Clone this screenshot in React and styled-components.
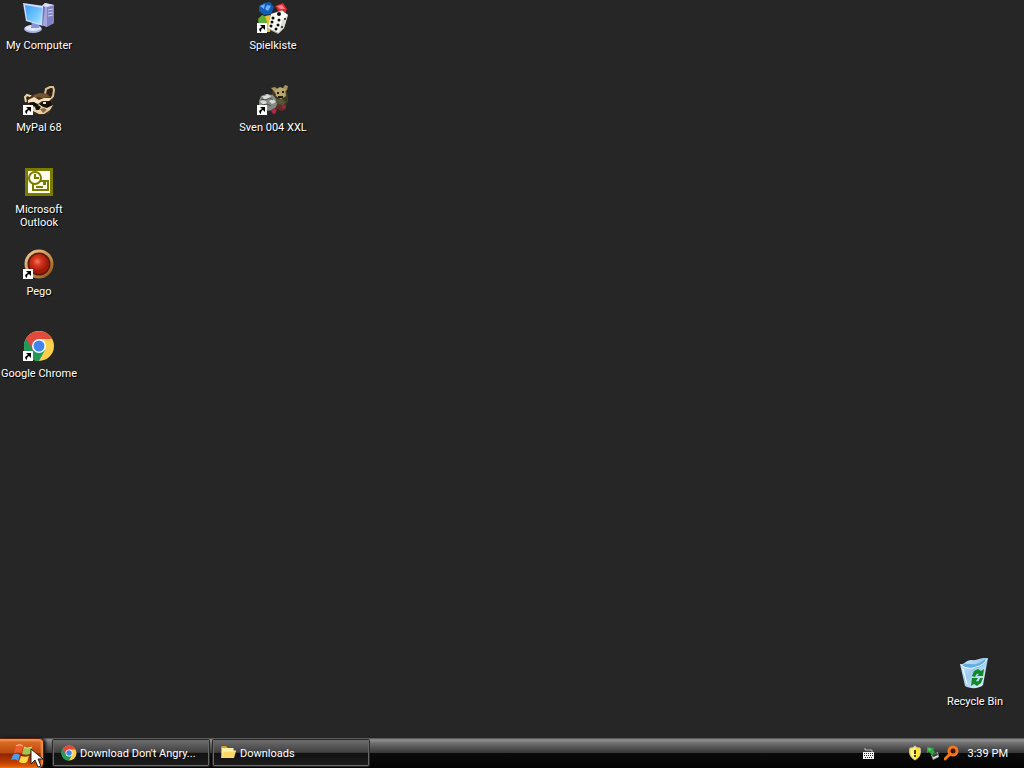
import React from "react";
import styled, { createGlobalStyle } from "styled-components";

const GlobalStyle = createGlobalStyle`
  * { box-sizing: border-box; }
  body { margin: 0; background: #262626; overflow: hidden; }
  body, button { font-family: Tahoma, Roboto, "Liberation Sans", sans-serif; font-size: 11px; line-height: 13px; color: #fff; }
`;
const Screen = styled.div`
  display: flex;
  flex-direction: column;
  height: 100vh;
`;
const Desktop = styled.main`
  flex: 1;
  min-height: 0;
  display: grid;
  grid-template-columns: repeat(auto-fill, 78px);
  grid-template-rows: repeat(auto-fill, 82px);
`;
const Shortcut = styled.button`
  grid-column: ${(p) => p.$col};
  grid-row: ${(p) => p.$row};
  display: flex;
  flex-direction: column;
  align-items: center;
  gap: 5px;
  padding: 2px 0 0;
  border: 0;
  background: none;
`;
const Label = styled.span`
  max-width: ${(p) => (p.$wrap ? "60px" : "none")};
  white-space: ${(p) => (p.$wrap ? "normal" : "nowrap")};
  text-shadow: 1px 1px 1px #000;
`;
const Icon = styled.svg`
  display: block;
  flex: none;
  width: ${(p) => p.$size || 32}px;
  height: ${(p) => p.$size || 32}px;
`;
const Taskbar = styled.footer`
  flex: none;
  height: 30px;
  display: flex;
  background: linear-gradient(#454545 0, #929292 6%, #727272 16%, #575757 30%, #373737 49%, #0b0b0b 51%, #030303 100%);
`;
const StartButton = styled.button`
  position: relative;
  width: 44px;
  padding: 0 0 0 11px;
  display: flex;
  align-items: center;
  border: 1px solid #5e1c05;
  border-width: 1px 1px 0 0;
  border-radius: 0 5px 5px 0;
  background: linear-gradient(#f5a060 0, #d86820 12%, #b94a10 47%, #8e2500 52%, #b83a00 78%, #e86708 100%);
  box-shadow: inset -2px 0 2px #f2914a, 2px 0 3px #111;
`;
const Pointer = styled.svg`
  position: absolute;
  left: 30px;
  top: 9px;
  width: 13px;
  height: 20px;
`;
const Tasks = styled.nav`
  flex: 1;
  min-width: 0;
  display: flex;
  gap: 4px;
  padding: 2px 0 2px 9px;
`;
const TaskButton = styled.button`
  flex: 0 1 156px;
  min-width: 0;
  display: flex;
  align-items: center;
  gap: 3px;
  padding: 0 7px;
  border: 1px solid #686868;
  border-radius: 1px;
  background: linear-gradient(#6a6a6a 0, #404040 47%, #121212 52%, #1c1c1c 100%);
  box-shadow: 0 0 0 1px #2a2a2a;
  white-space: nowrap;
`;
const Tray = styled.div`
  display: flex;
  align-items: center;
  gap: 2px;
  padding-right: 16px;
`;
const InputIndicator = styled.div`
  padding-right: 28px;
`;
const Clock = styled.time`
  padding-left: 6px;
  white-space: nowrap;
`;

const Arrow = () => (
  <g>
    <path d="M0 21h10v10H0z" fill="#fff" />
    <path d="M3 23h5v5l-2-2c-2 1-2 2-2 4-3-2-2-4 1-5z" fill="#000" />
  </g>
);

const ComputerIcon = () => (
  <Icon viewBox="0 0 32 32">
    <defs>
      <linearGradient id="screen" x1="0" y1="0" x2="1" y2="1">
        <stop offset="0" stopColor="#3f9cf5" /><stop offset=".6" stopColor="#72c7ff" /><stop offset="1" stopColor="#b5e8ff" />
      </linearGradient>
    </defs>
    <path d="M19 4l3-3 9 2v18l-8 4-4-2z" fill="#a4a6dc" />
    <path d="M24 5l7-2v18l-7 4z" fill="#8382c2" />
    <path d="M19 4l3-3 9 2-7 2z" fill="#dcdef7" />
    <path d="M25 8l5-1M25 11l5-1M25 14l5-1" stroke="#ccd0f6" />
    <ellipse cx="10" cy="27" rx="9" ry="4" fill="#a9b2df" />
    <ellipse cx="10" cy="26" rx="8" ry="3" fill="#e0e6fc" />
    <path d="M9 19h8l-1 7H8z" fill="#8895d4" />
    <path d="M0 1l21 3-1 20L3 19z" fill="#cfdcff" />
    <path d="M2 3l17 3-1 16L4 18z" fill="url(#screen)" />
    <path d="M20 4l2 1-2 18-1 1z" fill="#6d78bb" />
  </Icon>
);
const RaccoonIcon = () => (
  <Icon viewBox="0 0 32 32">
    <path d="M22 10l1-5 4-2h3l1 3-1 6-3 4z" fill="#2f2015" stroke="#dcc091" strokeWidth="2" />
    <path d="M3 18l-1-5 2-2 6 2" fill="#2f2015" stroke="#eed7ab" strokeWidth="2" />
    <path d="M4 16l5-5 7-2 9 1 4 5 1 8-4 6-8 2-8-2-5-6z" fill="#4a3220" />
    <path d="M11 11l6-2 7 1 3 3-7 1-5-1-6 3z" fill="#755432" />
    <path d="M5 16l6-3 5 3 5-2 8 0-3 3-7 0-4 3-5-2-5 1z" fill="#f3e3c1" />
    <path d="M5 19l6-1 4 3 5-3 8-1 1 4-5 3-5-2-4 2-6-2z" fill="#140e0a" />
    <path d="M8 22l5 1 3-3 4 3 4 1 6-3-3 5-6 4h-5l-6-3z" fill="#e5d2a8" />
    <path d="M17 25l4-1 3 2-4 3z" fill="#8d6945" />
    <path d="M12 23l3-2 3 2-2 3-3 0z" fill="#17100b" />
    <path d="M20 18h3v2h-3z" fill="#e9ddc3" />
    <Arrow />
  </Icon>
);
const OutlookIcon = () => (
  <Icon viewBox="0 0 32 32">
    <path d="M2 2h28v28H2z" fill="#7b7b00" />
    <path d="M5 5h22v22H5z" fill="#fffff1" />
    <path d="M10 15h15v9H10z" fill="#fffff1" stroke="#7b7b00" strokeWidth="2" />
    <circle cx="12" cy="12" r="6" fill="#fffff1" stroke="#7b7b00" strokeWidth="2" />
    <path d="M12 8v4h4M13 21h7" fill="none" stroke="#7b7b00" strokeWidth="2" />
    <path d="M20 16h3v3h-3z" fill="#7b7b00" />
  </Icon>
);
const PegoIcon = () => (
  <Icon viewBox="0 0 32 32">
    <defs>
      <radialGradient id="gem" cx=".42" cy=".38">
        <stop offset="0" stopColor="#f57862" /><stop offset=".4" stopColor="#d7371e" /><stop offset="1" stopColor="#a01a0a" />
      </radialGradient>
      <linearGradient id="rim" x1="0" y1="0" x2="1" y2="1">
        <stop offset="0" stopColor="#ecc897" /><stop offset=".6" stopColor="#c58a4c" /><stop offset="1" stopColor="#8b4b19" />
      </linearGradient>
    </defs>
    <circle cx="16" cy="16" r="13" fill="#5b1b08" stroke="url(#rim)" strokeWidth="3" />
    <circle cx="16" cy="16" r="10" fill="url(#gem)" />
    <Arrow />
  </Icon>
);
const ChromeIcon = ({ size, arrow }) => (
  <Icon viewBox="0 0 32 32" $size={size}>
    <circle cx="16" cy="16" r="15" fill="#fdd04b" />
    <path d="M16 16L3 8.500A15 15 0 0 0 16 31l6-11z" fill="#21995a" />
    <path d="M3 8.500A15 15 0 0 1 29 9H16L10 20z" fill="#e24a3b" />
    <circle cx="16" cy="16" r="7" fill="#fff" />
    <circle cx="16" cy="16" r="5.500" fill="#4284ed" />
    {arrow && <Arrow />}
  </Icon>
);
const GamesIcon = () => (
  <Icon viewBox="0 0 32 32">
    <path d="M2 4l5-3 6-1 4 5-3 7-7 1-5-4z" fill="#155bb5" />
    <path d="M3 4l5-2-1 5zM10 3l4 1-3 5-3-2z" fill="#63b5ff" />
    <path d="M18 4l8-3 4 6-2 5-6-2z" fill="#dc2933" />
    <path d="M20 4l5-1 3 4-5 0z" fill="#ff807e" />
    <path d="M1 17l4-4 5 2 2 6-6 6-4-3z" fill="#5caf37" />
    <path d="M8 14l5-1 2 4-2 13H9l1-10z" fill="#e9bd2e" />
    <path d="M14 12l11-4 6 5-4 13-6 6-10-5z" fill="#a9a9a4" />
    <path d="M14 12l11-3 6 4-5 5z" fill="#fff" />
    <path d="M14 12l12 5-4 14-11-5z" fill="#fafaf5" />
    <path d="M26 17l5-4-4 13-5 5z" fill="#deded7" />
    <g fill="#111"><circle cx="16" cy="16" r="1.500" /><circle cx="22" cy="18" r="1.500" /><circle cx="15" cy="20" r="1.500" /><circle cx="21" cy="23" r="1.500" /><circle cx="14" cy="24" r="1.500" /><circle cx="19" cy="27" r="1.500" /><circle cx="22" cy="12" r="2" /><circle cx="28" cy="17" r="1" /><circle cx="25" cy="25" r="1" /></g>
    <Arrow />
  </Icon>
);
const SheepIcon = () => (
  <Icon viewBox="0 0 32 32">
    <path d="M15 8l5-4 9 0 2 7 0 7-4 6-8 1-4-7z" fill="#3f3a24" />
    <path d="M14 4l4-1 4 4-3 3zM26 4l2-3 3 1-1 4-3 2z" fill="#a9935b" />
    <path d="M18 6l5-3 5 2 1 7-5 3-5-3z" fill="#b9a76f" />
    <path d="M20 8h2v2h-2zM25 7h2v2h-2zM21 12h5v2h-5z" fill="#25200e" />
    <path d="M2 17l2-5 5-2 7 1 3 4 1 6-3 5-8 1-7-4z" fill="#858987" />
    <path d="M5 12l3 0 2-2 4 2-2 3-5 0zM3 17l5-1 2 3-3 3zM12 17l4-2 3 3-4 2z" fill="#d8dad6" />
    <path d="M4 15l4 1 5-2 3 2M5 21l5-1 4 2" stroke="#4b4d4c" fill="none" />
    <path d="M20 20l5-2 4 3 0 4-4 2-5-2z" fill="#682a25" />
    <path d="M14 26l3-2 3 2-2 4-3-1zM25 21l4 1-3 3z" fill="#a62c44" />
    <path d="M19 15l6 0 4 3-3 3-6-1z" fill="#4d5938" />
    <Arrow />
  </Icon>
);
const BinIcon = () => (
  <Icon viewBox="0 0 32 32">
    <defs>
      <linearGradient id="bin" x1="0" y1="0" x2="1" y2="1">
        <stop offset="0" stopColor="#deefff" /><stop offset=".45" stopColor="#9bccef" /><stop offset="1" stopColor="#eefaff" />
      </linearGradient>
    </defs>
    <path d="M1 6c5 1 6-4 11-4 6 1 10-3 17-2l-5 27c-4 4-13 4-18 1z" fill="url(#bin)" />
    <path d="M3 7c6-3 8 0 14-1 5-1 7-4 11-5-3 7-10 10-17 9-4-1-6-1-8-3z" fill="#5eade3" />
    <path d="M2 7c5 4 10 4 15 2 5-1 9-4 11-8" fill="none" stroke="#effaff" />
    <path d="M4 11l4 15" stroke="#fff" fill="none" />
    <path d="M13 18l2-5 4-2 3 2 3-2-1 7h-6l2-2c-2-1-3 0-4 3zM24 20l-2 5-4 3-3-2-3 2 1-8h6l-2 3c2 1 3 0 4-3z" fill="#118928" />
  </Icon>
);
const FlagIcon = () => (
  <Icon viewBox="0 0 22 22" $size={22}>
    <path d="M5 3c3-2 5-1 7 0l-2 7C8 9 6 9 3 10z" fill="#f05a2d" />
    <path d="M13 4c3 2 5 1 8 0l-2 7c-3 1-5 1-8 0z" fill="#9cc84d" />
    <path d="M2 12c3-2 5-1 7 0l-2 6c-2-2-4-2-7-1z" fill="#4d9deb" />
    <path d="M10 13c3 1 5 1 8 0l-2 6c-3 2-5 1-8 0z" fill="#ffd747" />
    <path d="M5 3c3-2 5-1 7 0M13 4c3 2 5 1 8 0" stroke="#ffd6a1" fill="none" />
  </Icon>
);
const FolderIcon = () => (
  <Icon viewBox="0 0 16 16" $size={16}>
    <path d="M0 2l1-1h4l2 2h6v10H0z" fill="#d99d2a" />
    <path d="M1 3h11v9H1z" fill="#fff0a0" />
    <path d="M3 6h12l-2 7H0z" fill="#fbd867" />
    <path d="M3 6h12" stroke="#fff6bd" />
  </Icon>
);
const KeyboardIcon = () => (
  <Icon viewBox="0 0 16 16" $size={16}>
    <path d="M3 3v2h7v2" fill="none" stroke="#bbb" />
    <path d="M1 7h11v7H1z" fill="#f2f2f2" />
    <path d="M2 8.500h9M2 10.500h9M3 12.500h7" stroke="#222" strokeDasharray="1 1" />
  </Icon>
);
const ShieldIcon = () => (
  <Icon viewBox="0 0 16 16" $size={16}>
    <path d="M7 1c2 2 3 2 5 2 1 6 0 9-5 12C2 12 1 9 2 3c2 0 3 0 5-2z" fill="#ffe52c" stroke="#d7d5bc" />
    <path d="M7 2v12C3 11 2 8 3 4c1 0 2 0 4-2z" fill="#fff480" />
    <path d="M6 5h2v4H6zM6 10h2v2H6z" fill="#453a12" />
  </Icon>
);
const DeviceIcon = () => (
  <Icon viewBox="0 0 16 16" $size={16}>
    <path d="M5 10l7-3 1 5-6 3z" fill="#a9aeac" />
    <path d="M6 10l5-2 1 2-5 2z" fill="#363d39" />
    <path d="M7 13l5-2" stroke="#eee" />
    <path d="M1 2l7 1-1 2 2 2-3 3-3-3-2 1z" fill="#28ac3b" />
    <path d="M2 3l4 1-3 2z" fill="#63d66b" />
  </Icon>
);
const SearchIcon = () => (
  <Icon viewBox="0 0 16 16" $size={16}>
    <circle cx="9" cy="6" r="4" fill="#351607" stroke="#f4751c" strokeWidth="3" />
    <path d="M6 9l-5 5" stroke="#f4751c" strokeWidth="3" strokeLinecap="round" />
  </Icon>
);

const shortcuts = [
  { name: "My Computer", icon: <ComputerIcon />, col: 1, row: 1 },
  { name: "MyPal 68", icon: <RaccoonIcon />, col: 1, row: 2 },
  { name: "Microsoft Outlook", icon: <OutlookIcon />, col: 1, row: 3, wrap: true },
  { name: "Pego", icon: <PegoIcon />, col: 1, row: 4 },
  { name: "Google Chrome", icon: <ChromeIcon arrow />, col: 1, row: 5 },
  { name: "Spielkiste", icon: <GamesIcon />, col: 4, row: 1 },
  { name: "Sven 004 XXL", icon: <SheepIcon />, col: 4, row: 2 },
  { name: "Recycle Bin", icon: <BinIcon />, col: -2, row: -2 },
];

export default function App() {
  return (
    <Screen>
      <GlobalStyle />
      <Desktop>
        {shortcuts.map((s) => (
          <Shortcut key={s.name} $col={s.col} $row={s.row}>
            {s.icon}
            <Label $wrap={s.wrap}>{s.name}</Label>
          </Shortcut>
        ))}
      </Desktop>
      <Taskbar>
        <StartButton aria-label="Start">
          <FlagIcon />
          <Pointer viewBox="0 0 13 20">
            <path d="M1 1v15l4-4 3 7 3-1-3-7h5z" fill="#fff" stroke="#222" />
          </Pointer>
        </StartButton>
        <Tasks>
          <TaskButton><ChromeIcon size={16} />Download Don't Angry...</TaskButton>
          <TaskButton><FolderIcon />Downloads</TaskButton>
        </Tasks>
        <Tray>
          <InputIndicator><KeyboardIcon /></InputIndicator>
          <ShieldIcon />
          <DeviceIcon />
          <SearchIcon />
          <Clock>3:39 PM</Clock>
        </Tray>
      </Taskbar>
    </Screen>
  );
}
